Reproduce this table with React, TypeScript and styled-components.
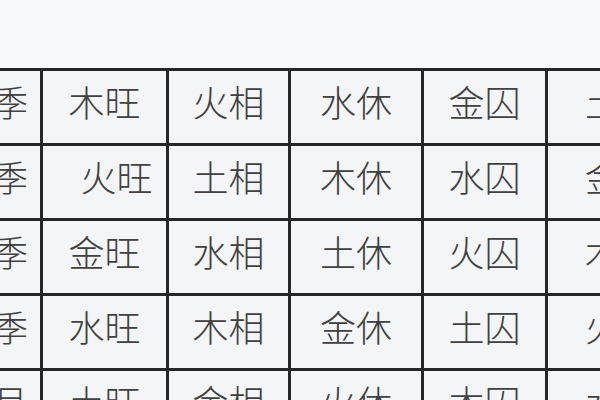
import React from 'react';
import styled, { createGlobalStyle } from 'styled-components';

const GlobalStyle = createGlobalStyle`
  html, body {
    margin: 0;
    padding: 0;
    background: #f8f9fb;
    overflow: hidden;
  }
  body {
    font-family: "Noto Sans CJK SC", "Noto Sans", sans-serif;
  }
`;

const Page = styled.div`
  width: 600px;
  height: 400px;
  overflow: hidden;
  background: #f8f9fb;
  padding-top: 68px;
  box-sizing: border-box;
`;

const Grid = styled.div`
  display: grid;
  grid-template-columns: 40px 123px 119px 130px 121px 160px;
  grid-auto-rows: 72px;
  gap: 3px;
  padding-top: 3px;
  width: max-content;
  background: #262626;
`;

type Align = 'end' | 'center' | 'start';

const Cell = styled.div<{ $align: Align; $shift?: number }>`
  display: flex;
  align-items: center;
  justify-content: ${p => (p.$align === 'end' ? 'flex-end' : p.$align === 'start' ? 'flex-start' : 'center')};
  overflow: hidden;
  white-space: nowrap;
  background: #f4f5f7;
  color: #404040;
  font-size: 36px;
  font-weight: 300;
  line-height: 1;
  padding-bottom: 12px;
  padding-right: ${p => (p.$align === 'end' ? '12px' : '0')};
  padding-left: ${p => (p.$align === 'start' ? '37px' : `${p.$shift ?? 0}px`)};
  box-sizing: border-box;
`;

const rows: string[][] = [
  ['春季', '木旺', '火相', '水休', '金囚', '土死'],
  ['夏季', '火旺', '土相', '木休', '水囚', '金死'],
  ['秋季', '金旺', '水相', '土休', '火囚', '木死'],
  ['冬季', '水旺', '木相', '金休', '土囚', '火死'],
  ['季月', '土旺', '金相', '火休', '木囚', '水死'],
];

const alignFor = (col: number): Align => (col === 0 ? 'end' : col === 5 ? 'start' : 'center');

export default function App() {
  return (
    <>
      <GlobalStyle />
      <Page>
        <Grid>
          {rows.map((row, r) =>
            row.map((text, c) => (
              <Cell
                key={`${r}-${c}`}
                $align={alignFor(c)}
                $shift={r === 1 && c === 1 ? 24 : 0}
              >
                {text}
              </Cell>
            ))
          )}
        </Grid>
      </Page>
    </>
  );
}
